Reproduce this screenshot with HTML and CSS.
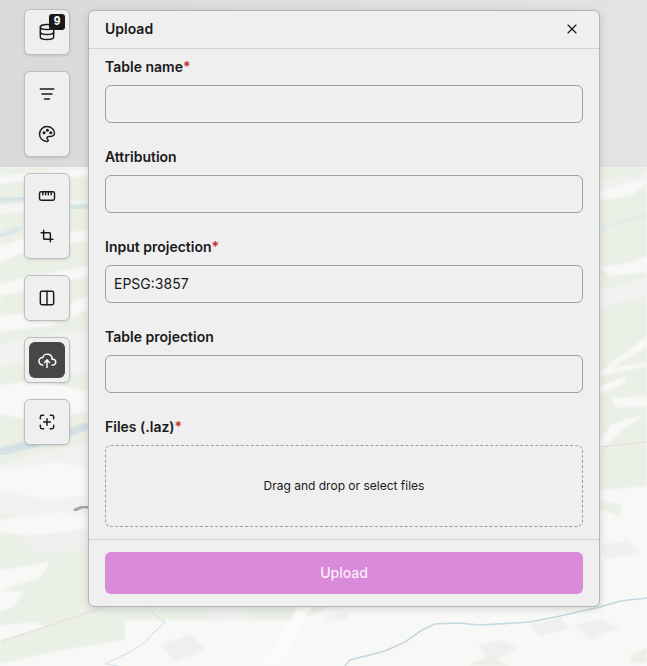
FILE: index.html
```html
<!DOCTYPE html>
<html lang="en">

<head>
    <meta charset="UTF-8">
    <meta name="viewport" content="width=device-width, initial-scale=1.0">
    <title>Upload</title>
    <link rel="stylesheet" href="styles.css">
</head>

<body>
    <!-- map underneath everything -->
    <svg class="map" viewBox="0 0 647 666" preserveAspectRatio="none" aria-hidden="true">
        <defs>
            <filter id="soft"><feGaussianBlur stdDeviation="1.2"></feGaussianBlur></filter>
            <filter id="softer"><feGaussianBlur stdDeviation="0.5"></feGaussianBlur></filter>
        </defs>
        <rect width="647" height="666" fill="#f8f8f7"></rect>
        <g filter="url(#soft)">
            <!-- green areas -->
            <polygon fill="#eaf0e6" points="0,167 647,167 647,486 600,490 600,607 330,607 300,620 125,620 125,640 60,650 0,664"></polygon>
            <polygon fill="#eaf0e6" points="600,500 622,505 620,516 600,510"></polygon>
            <polygon fill="#eaf0e6" points="630,655 647,648 647,662 632,664"></polygon>
            <polygon fill="#eaf0e6" points="470,664 490,656 510,666 470,666"></polygon>
            <!-- white and grey streaks, left -->
            <polygon fill="#f7f7f6" points="0,176 30,172 88,168 88,176 40,180 0,184"></polygon>
            <polygon fill="#f5f6f4" points="0,214 50,208 88,202 88,200 40,202 0,206"></polygon>
            <polygon fill="#f8f8f7" points="0,246 24,238 88,230 88,240 30,250 0,262"></polygon>
            <polygon fill="#f8f8f7" points="0,284 30,276 88,266 88,276 40,288 0,296"></polygon>
            <polygon fill="#f8f8f7" points="0,316 50,312 88,296 88,310 50,326 0,332"></polygon>
            <polygon fill="#f2f3f1" points="0,345 24,338 88,330 88,372 50,380 20,362 0,366"></polygon>
            <polygon fill="#f8f8f7" points="0,385 40,380 88,392 88,412 30,420 0,414"></polygon>
            <polygon fill="#f1f1f0" points="0,464 40,452 88,444 88,520 60,530 0,515"></polygon>
            <polygon fill="#f8f8f7" points="0,470 60,462 88,468 88,495 50,500 0,490"></polygon>
            <polygon fill="#f8f8f7" points="0,520 60,512 88,518 88,528 40,538 0,532"></polygon>
            <polygon fill="#efefee" points="20,536 88,530 88,548 40,556"></polygon>
            <polygon fill="#f8f8f7" points="0,570 50,562 40,578 0,590"></polygon>
            <polygon fill="#f8f8f7" points="0,590 24,592 14,606 0,612"></polygon>
            <polygon fill="#f8f8f7" points="0,625 40,622 44,628 0,640"></polygon>
            <!-- streaks, right -->
            <polygon fill="#f8f8f7" points="600,190 647,178 647,184 630,196 600,200"></polygon>
            <polygon fill="#f0f1ef" points="600,182 647,172 647,178 600,190"></polygon>
            <polygon fill="#f8f8f7" points="600,268 630,262 647,256 647,272 610,276"></polygon>
            <polygon fill="#f2f2f1" points="600,290 647,278 647,296 600,308"></polygon>
            <polygon fill="#f8f8f7" points="600,372 647,336 647,346 612,368 647,362 647,366 600,376"></polygon>
            <polygon fill="#f8f8f7" points="600,386 626,376 624,384 600,394"></polygon>
            <polygon fill="#f8f8f7" points="610,398 647,396 647,406 616,408"></polygon>
            <polygon fill="#f8f8f7" points="600,440 612,424 645,414 620,432 600,450"></polygon>
            <!-- grey blobs along the bottom -->
            <polygon fill="#f0f0f0" points="320,620 350,610 345,620"></polygon>
            <polygon fill="#efefef" points="478,645 500,640 520,648 490,662"></polygon>
            <polygon fill="#efefef" points="530,625 560,618 570,628 540,636"></polygon>
            <polygon fill="#efefef" points="160,645 190,634 205,650 175,662"></polygon>
            <polygon fill="#f0f0f0" points="600,545 628,540 640,552 606,560"></polygon>
            <polygon fill="#f0f0f0" points="575,625 600,618 620,628 590,640"></polygon>
            <polygon fill="#f0f0f0" points="205,612 240,608 250,618 215,622"></polygon>
            <!-- road -->
            <polygon fill="#fbfbfa" points="298,607 312,607 278,666 262,666"></polygon>
        </g>
        <!-- water -->
        <g fill="none" stroke-linecap="round" stroke-linejoin="round">
            <path d="M0 200 L24 198 M70 208 L88 206" stroke="#d6e4e6" stroke-width="5" filter="url(#soft)"></path>
            <path d="M0 236 L20 228" stroke="#d9e6e8" stroke-width="5" filter="url(#soft)"></path>
            <path d="M0 452 L40 442 L88 426" stroke="#d3e1e4" stroke-width="8" filter="url(#soft)"></path>
            <path d="M600 228 L647 215" stroke="#e0eaea" stroke-width="2" filter="url(#soft)"></path>
            <path d="M647 598 L620 601 L600 607 L560 616 L530 622 L480 625 L458 623 L435 624 L422 630 L405 642 L385 651 L350 660 L345 666" stroke="#c4d8df" stroke-width="1.6" filter="url(#softer)"></path>
            <path d="M150 607 L154 614 L165 622 L150 636 L146 642 L128 653 L105 664 L118 666" stroke="#d6e6ea" stroke-width="1.2" filter="url(#softer)"></path>
            <path d="M0 642 L105 607" stroke="#ecd8d8" stroke-width="1" stroke-dasharray="5 1"></path>
            <path d="M600 447 L647 442" stroke="#ecd8d8" stroke-width="1"></path>
            <path d="M75 510 L82 507 L88 507" stroke="#a2a9ad" stroke-width="3" filter="url(#softer)"></path>
        </g>
    </svg>
    <div class="top-band"></div>

    <div class="app">
        <nav class="toolbar">
            <div class="tool-group">
                <button class="tool-btn">
                    <svg class="icon" viewBox="0 0 24 24">
                        <path d="M12 6m-8 0a8 3 0 1 0 16 0a8 3 0 1 0 -16 0"></path>
                        <path d="M4 6v6a8 3 0 0 0 16 0v-6"></path>
                        <path d="M4 12v6a8 3 0 0 0 16 0v-6"></path>
                    </svg>
                    <span class="badge">9</span>
                </button>
            </div>
            <div class="tool-group">
                <button class="tool-btn">
                    <svg class="icon" viewBox="0 0 24 24">
                        <path d="M4 6h16"></path>
                        <path d="M6 12h12"></path>
                        <path d="M9 18h6"></path>
                    </svg>
                </button>
                <button class="tool-btn">
                    <svg class="icon" viewBox="0 0 24 24">
                        <path d="M12 21a9 9 0 0 1 0 -18c4.97 0 9 3.582 9 8c0 1.06 -.474 2.078 -1.318 2.828c-.844 .75 -1.989 1.172 -3.182 1.172h-2.5a2 2 0 0 0 -1 3.75a1.3 1.3 0 0 1 -1 2.25"></path>
                        <path d="M8.5 10.5m-1 0a1 1 0 1 0 2 0a1 1 0 1 0 -2 0"></path>
                        <path d="M12.5 7.5m-1 0a1 1 0 1 0 2 0a1 1 0 1 0 -2 0"></path>
                        <path d="M16.5 10.5m-1 0a1 1 0 1 0 2 0a1 1 0 1 0 -2 0"></path>
                    </svg>
                </button>
            </div>
            <div class="tool-group">
                <button class="tool-btn">
                    <svg class="icon" viewBox="0 0 24 24">
                        <rect x="3" y="7" width="18" height="10" rx="2"></rect>
                        <path d="M7 7v3.5"></path>
                        <path d="M10.3 7v3.5"></path>
                        <path d="M13.6 7v3.5"></path>
                        <path d="M17 7v3.5"></path>
                    </svg>
                </button>
                <button class="tool-btn">
                    <svg class="icon" viewBox="0 0 24 24">
                        <path d="M8 5v10a1 1 0 0 0 1 1h10"></path>
                        <path d="M5 8h10a1 1 0 0 1 1 1v10"></path>
                    </svg>
                </button>
            </div>
            <div class="tool-group">
                <button class="tool-btn">
                    <svg class="icon" viewBox="0 0 24 24">
                        <rect x="4" y="4" width="16" height="16" rx="2"></rect>
                        <path d="M12 4v16"></path>
                    </svg>
                </button>
            </div>
            <div class="tool-group">
                <button class="tool-btn active">
                    <svg class="icon" viewBox="0 0 24 24">
                        <path d="M7 18a4.6 4.4 0 0 1 0 -9a5 4.5 0 0 1 11 2h1a3.5 3.5 0 0 1 0 7h-1"></path>
                        <path d="M9 15l3 -3l3 3"></path>
                        <path d="M12 12l0 9"></path>
                    </svg>
                </button>
            </div>
            <div class="tool-group">
                <button class="tool-btn">
                    <svg class="icon" viewBox="0 0 24 24">
                        <path d="M4 8v-2a2 2 0 0 1 2 -2h2"></path>
                        <path d="M4 16v2a2 2 0 0 0 2 2h2"></path>
                        <path d="M16 4h2a2 2 0 0 1 2 2v2"></path>
                        <path d="M16 20h2a2 2 0 0 0 2 -2v-2"></path>
                        <path d="M8 12h8"></path>
                        <path d="M12 8v8"></path>
                    </svg>
                </button>
            </div>
        </nav>

        <section class="panel">
            <header class="panel-header">
                <h2>Upload</h2>
                <button class="close-btn" aria-label="Close">
                    <svg class="icon-close" viewBox="0 0 24 24">
                        <path d="M18 6l-12 12"></path>
                        <path d="M6 6l12 12"></path>
                    </svg>
                </button>
            </header>

            <form class="panel-body">
                <div class="field">
                    <label>Table name<span class="required">*</span></label>
                    <input type="text">
                </div>
                <div class="field">
                    <label>Attribution</label>
                    <input type="text">
                </div>
                <div class="field">
                    <label>Input projection<span class="required">*</span></label>
                    <input type="text" value="EPSG:3857">
                </div>
                <div class="field">
                    <label>Table projection</label>
                    <input type="text">
                </div>
                <div class="field">
                    <label>Files (.laz)<span class="required">*</span></label>
                    <div class="dropzone">Drag and drop or select files</div>
                </div>
            </form>

            <footer class="panel-footer">
                <button class="upload-btn">Upload</button>
            </footer>
        </section>
    </div>
</body>

</html>
```

FILE: styles.css
```css
* {
    margin: 0;
    padding: 0;
    box-sizing: border-box;
}

html,
body {
    height: 100%;
    overflow: hidden;
}

body {
    font-family: Inter, "Liberation Sans", sans-serif;
    color: #1a1a1a;
    background-color: #f8f8f7;
}

.map {
    position: absolute;
    top: 0;
    left: 0;
    width: 647px;
    height: 666px;
}

.top-band {
    position: absolute;
    top: 0;
    left: 0;
    width: 100%;
    height: 167px;
    background: linear-gradient(to right, #dadada, #e3e3e3);
}

.app {
    position: relative;
    display: flex;
    align-items: flex-start;
    gap: 18px;
    padding: 9px 0 0 24px;
}

.toolbar {
    display: flex;
    flex-direction: column;
    gap: 16px;
}

.tool-group {
    display: flex;
    flex-direction: column;
    gap: 4px;
    padding: 4px;
    background: #efefef;
    border: 1px solid #bdbdbd;
    border-radius: 6px;
    box-shadow: 0 1px 3px rgba(0, 0, 0, 0.12);
}

.tool-btn {
    position: relative;
    display: flex;
    align-items: center;
    justify-content: center;
    width: 36px;
    height: 36px;
    border: none;
    border-radius: 6px;
    background: transparent;
    color: #1a1a1a;
}

.tool-btn.active {
    background: #474747;
    color: #fff;
}

.icon {
    width: 20px;
    height: 20px;
    fill: none;
    stroke: currentColor;
    stroke-width: 1.75;
    stroke-linecap: round;
    stroke-linejoin: round;
}

.badge {
    position: absolute;
    top: 0;
    right: 0;
    width: 16px;
    height: 16px;
    border-radius: 3px;
    background: #1a1a1a;
    color: #fff;
    font-size: 12px;
    font-weight: 600;
    line-height: 15px;
    text-align: center;
}

.panel {
    display: flex;
    flex-direction: column;
    width: 512px;
    margin-top: 1px;
    background: #efefef;
    border: 1px solid #b4b4b4;
    border-radius: 6px;
    box-shadow: 0 2px 8px rgba(0, 0, 0, 0.14);
}

.panel-header {
    display: flex;
    align-items: center;
    justify-content: space-between;
    height: 38px;
    padding: 0 16px 2px;
    border-bottom: 1px solid #d2d2d2;
}

.panel-header h2 {
    font-size: 14px;
    font-weight: 600;
}

.close-btn {
    display: flex;
    border: none;
    background: transparent;
    color: #1a1a1a;
    margin-right: 3px;
}

.icon-close {
    width: 16px;
    height: 16px;
    fill: none;
    stroke: currentColor;
    stroke-width: 1.75;
    stroke-linecap: round;
    stroke-linejoin: round;
}

.panel-body {
    display: flex;
    flex-direction: column;
    gap: 24px;
    padding: 8px 16px 12px;
}

.field {
    display: flex;
    flex-direction: column;
    gap: 8px;
}

.field label {
    font-size: 14px;
    font-weight: 600;
    line-height: 20px;
}

.required {
    color: #c92a2a;
}

.field input {
    height: 38px;
    padding: 0 8px 2px;
    font-family: inherit;
    font-size: 14px;
    color: #1a1a1a;
    background: #efefef;
    border: 1px solid #9e9e9e;
    border-radius: 6px;
}

.dropzone {
    display: flex;
    align-items: center;
    justify-content: center;
    height: 82px;
    padding-bottom: 2px;
    font-size: 12px;
    border: 1px dashed #9e9e9e;
    border-radius: 6px;
}

.panel-footer {
    padding: 12px 16px;
    border-top: 1px solid #d2d2d2;
}

.upload-btn {
    display: block;
    width: 100%;
    height: 42px;
    padding-bottom: 2px;
    font-family: inherit;
    font-size: 14px;
    font-weight: 500;
    color: #fbeefb;
    background: #d98ad9;
    border: none;
    border-radius: 6px;
}
```
